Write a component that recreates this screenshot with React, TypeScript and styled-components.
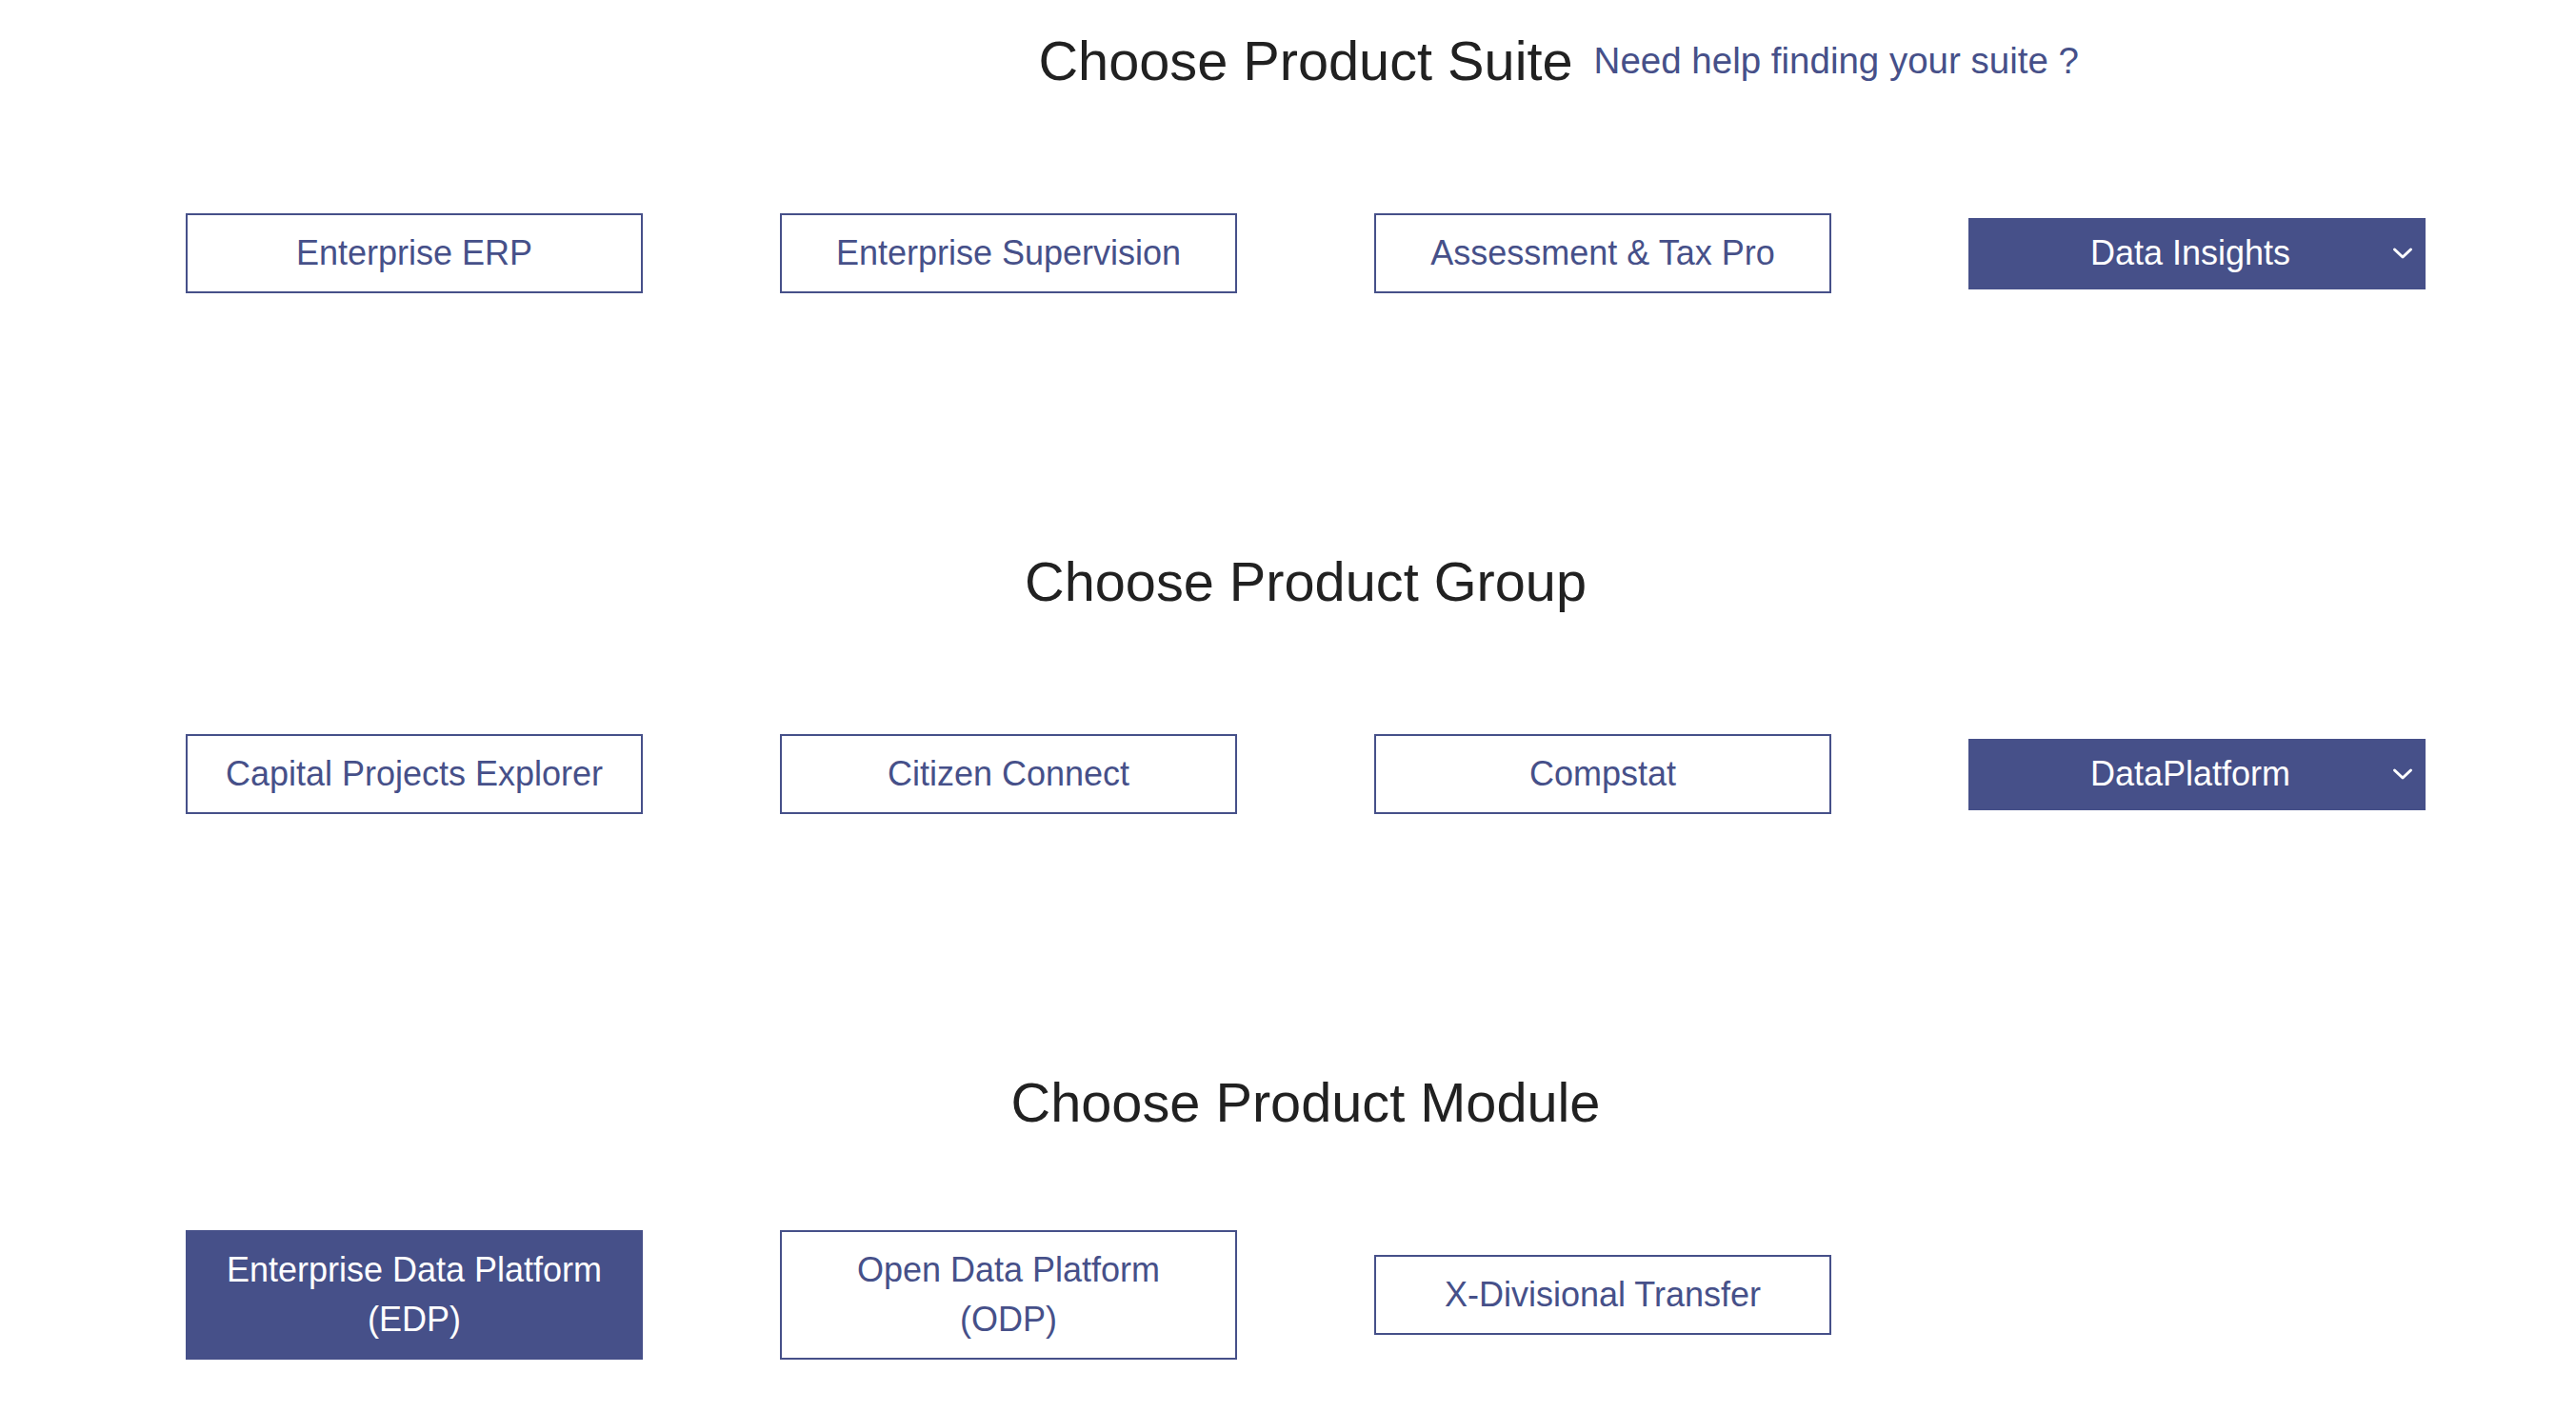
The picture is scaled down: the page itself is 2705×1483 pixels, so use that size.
import styled, { createGlobalStyle } from 'styled-components';

const GlobalStyle = createGlobalStyle`
  html, body {
    margin: 0;
    padding: 0;
    background: #ffffff;
    font-family: "Liberation Sans", Arial, Helvetica, sans-serif;
  }
`;

const BRAND = '#465089';

const StyledPage = styled.div`
  width: 2352px;
  margin-left: 195px;
  padding-top: 32px;
`;

const StyledSection = styled.section`
  margin-bottom: 193px;
  &:last-child {
    margin-bottom: 0;
  }
`;

const StyledHeadingRow = styled.div`
  display: grid;
  grid-template-columns: 1fr auto 1fr;
  column-gap: 22px;
  align-items: center;
`;

const StyledHeading = styled.h2`
  grid-column: 2;
  margin: 0;
  font-size: 57.7px;
  line-height: 64px;
  font-weight: 400;
  color: #212121;
  white-space: nowrap;
`;

const StyledHelpLink = styled.a`
  grid-column: 3;
  justify-self: start;
  font-size: 38.5px;
  line-height: 44px;
  color: ${BRAND};
  text-decoration: none;
  white-space: nowrap;
  cursor: pointer;
`;

const StyledOptions = styled.div`
  margin-top: 50px;
  height: 240px;
  display: grid;
  grid-template-columns: repeat(4, 480px);
  column-gap: 144px;
  align-items: center;
`;

const StyledOption = styled.button<{ $active?: boolean }>`
  box-sizing: border-box;
  width: 480px;
  padding: 14px 10px;
  border: 2px solid ${BRAND};
  background: ${p => (p.$active ? BRAND : '#ffffff')};
  color: ${p => (p.$active ? '#ffffff' : BRAND)};
  font-family: inherit;
  font-size: 36px;
  line-height: 52px;
  text-align: center;
  cursor: pointer;
`;

const StyledSelect = styled.button`
  position: relative;
  box-sizing: border-box;
  width: 480px;
  height: 75px;
  border: none;
  background: ${BRAND};
  color: #ffffff;
  font-family: inherit;
  font-size: 36px;
  text-align: center;
  padding: 0 46px 0 32px;
  cursor: pointer;
  svg {
    position: absolute;
    right: 12px;
    top: 50%;
    transform: translateY(-50%);
  }
`;

const Chevron = () => (
  <svg width="24" height="16" viewBox="0 0 24 16">
    <path d="M3.5 4 L12 12 L20.5 4" fill="none" stroke="#ffffff" strokeWidth="3" strokeLinecap="round" strokeLinejoin="round" />
  </svg>
);

interface Option {
  lines: string[];
  active?: boolean;
}

interface SectionProps {
  title: string;
  options: Option[];
  selected?: string;
  help?: string;
}

const Section = ({ title, options, selected, help }: SectionProps) => (
  <StyledSection>
    <StyledHeadingRow>
      <StyledHeading>{title}</StyledHeading>
      {help && <StyledHelpLink>{help}</StyledHelpLink>}
    </StyledHeadingRow>
    <StyledOptions>
      {options.map(opt => (
        <StyledOption key={opt.lines.join(' ')} $active={opt.active}>
          {opt.lines.map((line, i) => (
            <span key={line}>
              {i > 0 && <br />}
              {line}
            </span>
          ))}
        </StyledOption>
      ))}
      {selected && (
        <StyledSelect>
          {selected}
          <Chevron />
        </StyledSelect>
      )}
    </StyledOptions>
  </StyledSection>
);

const App = () => (
  <>
    <GlobalStyle />
    <StyledPage>
      <Section
        title="Choose Product Suite"
        help="Need help finding your suite ?"
        options={[
          { lines: ['Enterprise ERP'] },
          { lines: ['Enterprise Supervision'] },
          { lines: ['Assessment & Tax Pro'] },
        ]}
        selected="Data Insights"
      />
      <Section
        title="Choose Product Group"
        options={[
          { lines: ['Capital Projects Explorer'] },
          { lines: ['Citizen Connect'] },
          { lines: ['Compstat'] },
        ]}
        selected="DataPlatform"
      />
      <Section
        title="Choose Product Module"
        options={[
          { lines: ['Enterprise Data Platform', '(EDP)'], active: true },
          { lines: ['Open Data Platform', '(ODP)'] },
          { lines: ['X-Divisional Transfer'] },
        ]}
      />
    </StyledPage>
  </>
);

export default App;
